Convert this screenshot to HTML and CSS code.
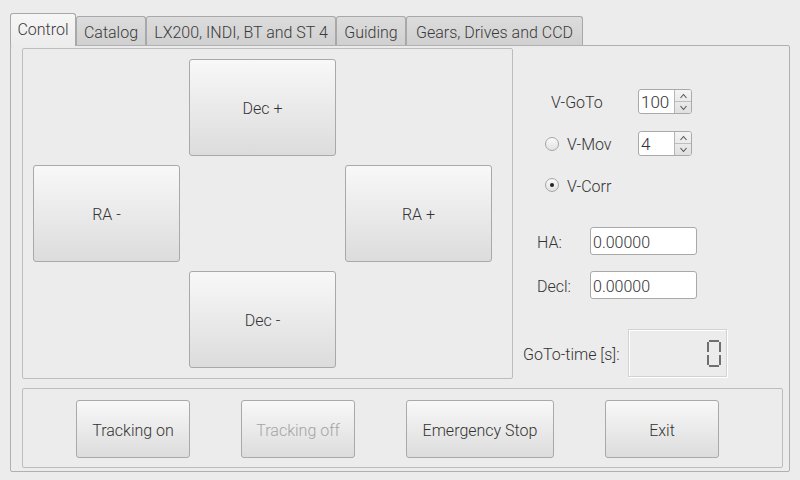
FILE: index.html
```html
<!DOCTYPE html>
<html>
<head>
<meta charset="utf-8">
<link rel="stylesheet" href="styles.css">
</head>
<body>
<div class="window">
  <div class="tabs">
    <div class="tab active w-control">Control</div>
    <div class="tab w-catalog">Catalog</div>
    <div class="tab w-lx">LX200, INDI, BT and ST 4</div>
    <div class="tab w-guiding">Guiding</div>
    <div class="tab w-gears">Gears, Drives and CCD</div>
  </div>
  <div class="pane">
    <div class="top">
      <div class="group pad">
        <div></div>
        <button class="btn big">Dec +</button>
        <div></div>
        <button class="btn big">RA -</button>
        <div></div>
        <button class="btn big">RA +</button>
        <div></div>
        <button class="btn big">Dec -</button>
        <div></div>
      </div>
      <div class="side">
        <div class="row r1">
          <span class="lbl l1">V-GoTo</span>
          <div class="spin"><span class="val">100</span><span class="arrows"><span class="up"><svg width="9" height="6" viewBox="0 0 9 6"><path d="M1.5 5 L4.5 1.5 L7.5 5" fill="none" stroke="#555" stroke-width="1.1"/></svg></span><span class="dn"><svg width="9" height="6" viewBox="0 0 9 6"><path d="M1.5 1 L4.5 4.5 L7.5 1" fill="none" stroke="#555" stroke-width="1.1"/></svg></span></span></div>
        </div>
        <div class="row r2">
          <span class="radio"></span>
          <span class="lbl l2">V-Mov</span>
          <div class="spin"><span class="val">4</span><span class="arrows"><span class="up"><svg width="9" height="6" viewBox="0 0 9 6"><path d="M1.5 5 L4.5 1.5 L7.5 5" fill="none" stroke="#555" stroke-width="1.1"/></svg></span><span class="dn"><svg width="9" height="6" viewBox="0 0 9 6"><path d="M1.5 1 L4.5 4.5 L7.5 1" fill="none" stroke="#555" stroke-width="1.1"/></svg></span></span></div>
        </div>
        <div class="row r3">
          <span class="radio checked"></span>
          <span class="lbl">V-Corr</span>
        </div>
        <div class="row r4">
          <span class="lbl l4">HA:</span>
          <div class="field">0.00000</div>
        </div>
        <div class="row r5">
          <span class="lbl l4">Decl:</span>
          <div class="field">0.00000</div>
        </div>
        <div class="row r6">
          <span class="lbl l6">GoTo-time [s]:</span>
          <div class="lcd">
            <svg width="14" height="27" viewBox="0 0 14 27">
              <g stroke="#3a3a3a" stroke-width="1.4" fill="none">
                <path d="M2 1 H12"/>
                <path d="M1 2 V12"/>
                <path d="M13 2 V12"/>
                <path d="M1 15 V25"/>
                <path d="M13 15 V25"/>
                <path d="M2 26 H12"/>
              </g>
            </svg>
          </div>
        </div>
      </div>
    </div>
    <div class="group bottom">
      <button class="btn b1">Tracking on</button>
      <button class="btn b1 disabled">Tracking off</button>
      <button class="btn b2">Emergency Stop</button>
      <button class="btn b1">Exit</button>
    </div>
  </div>
</div>
</body>
</html>
```
FILE: styles.css
```css
* { box-sizing: border-box; }
html, body {
  margin: 0;
  padding: 0;
  background: #ececec;
  width: 800px;
  height: 480px;
  overflow: hidden;
  font-family: Roboto, "Liberation Sans", sans-serif;
  font-size: 16px;
  font-weight: 300;
  color: #333;
}
.window {
  padding: 13px 10px 0 10px;
}
.tabs {
  display: flex;
  align-items: flex-end;
  height: 33px;
  position: relative;
  z-index: 2;
}
.tab {
  height: 29px;
  margin-bottom: 1px;
  border: 1px solid #a8a8a8;
  border-bottom: none;
  border-radius: 3px 3px 0 0;
  background: linear-gradient(#dcdcdc, #d0d0d0);
  display: flex;
  align-items: center;
  justify-content: center;
  color: #3a3a3a;
  white-space: nowrap;
  padding-top: 2px;
}
.tab.active {
  height: 33px;
  margin-bottom: 0;
  background: linear-gradient(#f6f6f6, #ececec);
  border-color: #a8a8a8;
  padding-top: 0;
  padding-bottom: 2px;
}
.w-control { width: 66px; }
.w-catalog { width: 70px; }
.w-lx { width: 190px; }
.w-guiding { width: 70px; }
.w-gears { width: 177px; }

.pane {
  margin-top: -1px;
  height: 427px;
  border: 1px solid #b0b0b0;
  border-radius: 2px;
  padding: 2px 6px 0 11px;
  position: relative;
  z-index: 1;
}
.top {
  display: flex;
  height: 331px;
}
.group {
  border: 1px solid #bdbdbd;
  border-radius: 2px;
}
.pad {
  width: 491px;
  height: 331px;
  display: grid;
  grid-template-columns: 147px 147px 147px;
  grid-template-rows: 97px 97px 97px;
  gap: 9px;
  padding: 10px 0 0 10px;
}
.btn {
  font-family: Roboto, "Liberation Sans", sans-serif;
  font-size: 16px;
  font-weight: 300;
  color: #333;
  border: 1px solid #a9a9a9;
  border-radius: 3px;
  background: linear-gradient(#f8f8f8, #dcdcdc);
  padding: 2px 0 0 0;
  margin: 0;
}
.btn.disabled { color: #a4a4a4; }

.side {
  width: 270px;
  display: flex;
  flex-direction: column;
}
.row { display: flex; align-items: center; }
.lbl { white-space: nowrap; padding-top: 2px; }
.r1 { margin-top: 41px; height: 25px; padding-left: 38px; }
.l1 { width: 87px; }
.r2 { margin-top: 17px; height: 25px; padding-left: 32px; }
.l2 { width: 71px; }
.r3 { margin-top: 19px; height: 20px; padding-left: 32px; }
.r4 { margin-top: 32px; height: 28px; padding-left: 24px; }
.r5 { margin-top: 16px; height: 28px; padding-left: 24px; }
.l4 { width: 53px; }
.r6 { margin-top: 30px; height: 48px; padding-left: 10px; }
.l6 { width: 105px; }

.radio {
  width: 14px;
  height: 14px;
  border-radius: 50%;
  border: 1px solid #a6a6a6;
  background: linear-gradient(#fafafa, #e2e2e2);
  margin-right: 8px;
  position: relative;
}
.radio.checked::after {
  content: "";
  position: absolute;
  left: 4px;
  top: 4px;
  width: 4px;
  height: 4px;
  border-radius: 50%;
  background: #222;
}
.spin {
  width: 54px;
  height: 25px;
  border: 1px solid #a9a9a9;
  border-radius: 3px;
  background: #fff;
  display: flex;
}
.spin .val {
  flex: 1;
  font-size: 17px;
  padding-left: 2px;
  padding-top: 1px;
  display: flex;
  align-items: center;
  color: #333;
}
.arrows {
  width: 17px;
  border-left: 1px solid #b5b5b5;
  background: linear-gradient(#f4f4f4, #e0e0e0);
  display: flex;
  flex-direction: column;
  border-radius: 0 2px 2px 0;
}
.arrows span {
  flex: 1;
  display: flex;
  align-items: center;
  justify-content: center;
}
.arrows .up { border-bottom: 1px solid #bdbdbd; }
.field {
  width: 107px;
  height: 28px;
  border: 1px solid #a9a9a9;
  border-radius: 3px;
  background: #fff;
  font-size: 16px;
  padding-left: 2px;
  padding-top: 2px;
  display: flex;
  align-items: center;
  color: #333;
}
.lcd {
  width: 99px;
  height: 48px;
  border: 1px solid #d2d2d2;
  box-shadow: inset 1px 1px 0 #fff, 1px 1px 0 #fff;
  display: flex;
  align-items: center;
  justify-content: flex-end;
  padding-right: 5px;
  padding-top: 1px;
}
.bottom {
  margin-top: 9px;
  height: 80px;
  width: 761px;
  display: flex;
  gap: 51px;
  padding: 11px 0 0 53px;
}
.bottom .btn { height: 58px; }
.b1 { width: 114px; }
.b2 { width: 148px; }
```
